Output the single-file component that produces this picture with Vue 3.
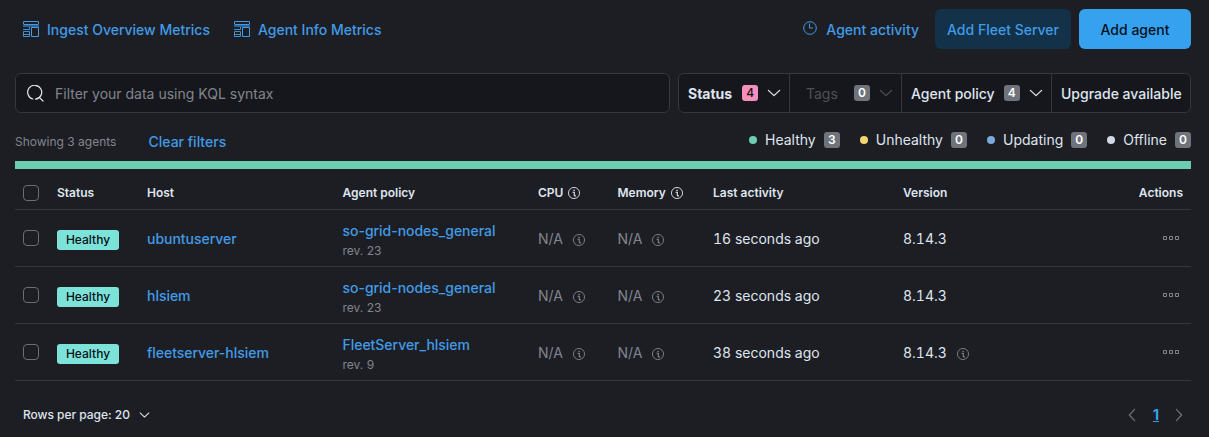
<script setup>
import { h } from 'vue'

const dashboards = ['Ingest Overview Metrics', 'Agent Info Metrics']
const statuses = [
  { name: 'Healthy', count: 3, tone: 'green' },
  { name: 'Unhealthy', count: 0, tone: 'yellow' },
  { name: 'Updating', count: 0, tone: 'blue' },
  { name: 'Offline', count: 0, tone: 'grey' },
]
const agents = [
  { host: 'ubuntuserver', policy: 'so-grid-nodes_general', rev: 23, seen: '16 seconds ago', version: '8.14.3' },
  { host: 'hlsiem', policy: 'so-grid-nodes_general', rev: 23, seen: '23 seconds ago', version: '8.14.3' },
  { host: 'fleetserver-hlsiem', policy: 'FleetServer_hlsiem', rev: 9, seen: '38 seconds ago', version: '8.14.3', note: true },
]

const stroke = { fill: 'none', stroke: 'currentColor' }
const InfoIcon = () =>
  h('svg', { width: 12, height: 12, viewBox: '0 0 16 16' }, [
    h('circle', { cx: 8, cy: 8, r: 7.4, ...stroke, 'stroke-width': 1.2 }),
    h('path', { d: 'M6 7h2.4v4.800M8.400 11.800h2.200M7.200 4.500h1.800', ...stroke, 'stroke-width': 1.5 }),
  ])
const Chevron = (props) =>
  h('svg', { width: props.size, height: props.size, viewBox: '0 0 16 16' }, [
    h('path', { d: 'M1.600 5L8 11l6.400-6', ...stroke, 'stroke-width': 1.5, 'stroke-linecap': 'round', 'stroke-linejoin': 'round' }),
  ])
Chevron.props = ['size']
</script>

<template>
  <main class="page">
    <header class="top">
      <nav class="links">
        <a v-for="d in dashboards" :key="d" class="link dash">
          <svg width="16" height="16" viewBox="0 0 16 16" fill="none" stroke="currentColor">
            <rect x=".5" y=".5" width="15" height="3" rx=".5" />
            <path d="M0 5h16" stroke-width="2" opacity=".55" />
            <path d="M0 8.500h6.500V6M.5 10.500h6v5h-6zM.5 13.500h6" opacity=".9" />
            <path d="M8.500 6.500h7v9h-7z" />
          </svg>
          <span>{{ d }}</span>
        </a>
      </nav>
      <div class="buttons">
        <a class="link activity">
          <svg width="14" height="14" viewBox="0 0 14 14" fill="none" stroke="currentColor">
            <circle cx="7" cy="7" r="6.300" />
            <path d="M6.500 2.500v4.500h3.500" />
          </svg>
          <span>Agent activity</span>
        </a>
        <button class="btn tint">Add Fleet Server</button>
        <button class="btn fill">Add agent</button>
      </div>
    </header>

    <section class="search">
      <div class="query">
        <svg width="17" height="17" viewBox="0 0 17 17" fill="none" stroke="currentColor" stroke-width="1.200" stroke-linecap="round">
          <path d="M5.800 14A7 7 0 1 1 8.600 14.200M12.300 12.300l3.700 3.700" />
        </svg>
        <span>Filter your data using KQL syntax</span>
      </div>
      <div class="filters">
        <div class="filter f-status"><b>Status</b><i class="badge pink">4</i><Chevron :size="14" /></div>
        <div class="filter f-tags"><span>Tags</span><i class="badge">0</i><Chevron :size="14" /></div>
        <div class="filter f-policy"><span>Agent policy</span><i class="badge">4</i><Chevron :size="14" /></div>
        <div class="filter f-upgrade"><span>Upgrade available</span></div>
      </div>
    </section>

    <section class="summary">
      <span class="showing">Showing 3 agents</span>
      <a class="link">Clear filters</a>
      <ul class="legend">
        <li v-for="s in statuses" :key="s.name">
          <span class="dot" :class="s.tone"></span><span>{{ s.name }}</span><i class="badge">{{ s.count }}</i>
        </li>
      </ul>
    </section>
    <div class="bar"></div>

    <section class="table">
      <div class="row head">
        <div><span class="check"></span></div>
        <div>Status</div>
        <div>Host</div>
        <div>Agent policy</div>
        <div class="hinted">CPU <InfoIcon /></div>
        <div class="hinted">Memory <InfoIcon /></div>
        <div>Last activity</div>
        <div>Version</div>
        <div class="end">Actions</div>
      </div>
      <div v-for="a in agents" :key="a.host" class="row agent">
        <div><span class="check"></span></div>
        <div><span class="health">Healthy</span></div>
        <div class="text"><a class="link">{{ a.host }}</a></div>
        <div class="policy"><a class="link">{{ a.policy }}</a><small>rev. {{ a.rev }}</small></div>
        <div class="text na">N/A <InfoIcon /></div>
        <div class="text na">N/A <InfoIcon /></div>
        <div class="text num">{{ a.seen }}</div>
        <div class="text num version">{{ a.version }} <InfoIcon v-if="a.note" /></div>
        <div class="end">
          <svg class="dots" width="16" height="4" viewBox="0 0 16 4" fill="none" stroke="currentColor">
            <path d="M.5.5h3v3h-3zM6.500.5h3v3h-3zM12.500.5h3v3h-3z" />
          </svg>
        </div>
      </div>
    </section>

    <footer class="foot">
      <div class="per-page">Rows per page: 20 <Chevron :size="12" /></div>
      <div class="pager">
        <Chevron class="prev" :size="14" />
        <span class="current">1</span>
        <Chevron class="next" :size="14" />
      </div>
    </footer>
  </main>
</template>

<style>
body {
  background: #1d1e24;
}
</style>

<style scoped>
.page {
  box-sizing: border-box;
  width: 1209px;
  height: 437px;
  overflow: hidden;
  padding: 9px 18px 0 15px;
  background: #1d1e24;
  color: #dfe5ef;
  font: 400 14px/20px Inter, sans-serif;
}
svg {
  flex: none;
  display: block;
}
.link {
  color: #419be6;
  font-weight: 500;
}
.table .link {
  letter-spacing: -0.03px;
}
.top,
.links,
.buttons,
.dash,
.activity,
.search,
.query,
.filters,
.filter,
.summary,
.legend,
.legend li,
.foot,
.per-page,
.pager {
  display: flex;
  align-items: center;
}
.top {
  justify-content: space-between;
  height: 40px;
}
.links {
  gap: 24px;
  padding: 2px 0 0 8px;
}
.dash {
  gap: 8px;
}
.dash svg {
  margin-top: -2px;
}
.activity {
  gap: 9px;
  margin-right: 16px;
  padding-top: 2px;
}
.activity svg {
  margin-top: -4px;
}
.btn {
  height: 40px;
  padding: 2px 0 0;
  border: 0;
  border-radius: 6px;
  font: 500 14px/20px Inter, sans-serif;
}
.tint {
  width: 136px;
  margin-right: 8px;
  background: #133149;
  color: #419be6;
}
.fill {
  width: 112px;
  background: #36a2ef;
  color: #07101a;
}
.search {
  gap: 8px;
  margin-top: 24px;
}
.query,
.filters {
  box-sizing: border-box;
  height: 40px;
  border: 1px solid #343741;
  border-radius: 6px;
  background: #16171c;
}
.query {
  width: 655px;
  gap: 11px;
  padding-left: 11px;
  color: #81858f;
}
.query svg {
  color: #dfe5ef;
}
.query span {
  padding-top: 2px;
}
.filters {
  flex: 1;
}
.filter {
  box-sizing: border-box;
  height: 38px;
  border-left: 1px solid #343741;
  font-weight: 500;
  padding-left: 9px;
}
.filter > span,
.filter > b {
  padding-top: 2px;
}
.filter b {
  font-weight: 700;
}
.filter svg {
  margin-left: 9px;
}
.f-status {
  width: 110px;
  border-left: 0;
}
.f-tags {
  width: 112px;
  padding-left: 16px;
  color: #4d5058;
  font-weight: 400;
}
.f-policy {
  width: 150px;
}
.f-upgrade {
  flex: 1;
  white-space: nowrap;
}
.badge {
  width: 16px;
  height: 16px;
  border-radius: 3px;
  background: #6f737b;
  color: #fff;
  font: 600 12px/16px Inter, sans-serif;
  text-align: center;
}
.filter .badge {
  margin-left: 10px;
}
.f-tags .badge {
  margin-left: 16px;
}
.f-policy .badge {
  margin-left: 9px;
}
.badge.pink {
  background: #f68fbe;
  color: #111;
  font-weight: 500;
}
.summary {
  height: 48px;
}
.showing {
  width: 133.500px;
  padding-top: 10px;
  color: #81858f;
  font-size: 12px;
}
.summary > .link {
  padding-top: 10px;
}
.legend {
  gap: 20px;
  margin: 0 0 0 auto;
  padding: 6px 0 0;
  list-style: none;
}
.legend .badge {
  margin-left: 8px;
}
.dot {
  width: 8px;
  height: 8px;
  margin-right: 8px;
  border-radius: 50%;
}
.green {
  background: #6dccb1;
}
.yellow {
  background: #f1d86f;
}
.blue {
  background: #79aad9;
}
.grey {
  background: #d3dae6;
}
.bar {
  height: 8px;
  background: #6dccb1;
}
.row {
  display: grid;
  grid-template-columns: 34px 90px 195.500px 195.500px 79.500px 95.500px 190px 1fr 80px;
  align-items: center;
  box-sizing: border-box;
  height: 57px;
  border-bottom: 1px solid #343741;
}
.row > div {
  padding: 0 8px;
  white-space: nowrap;
}
.num {
  font-feature-settings: 'tnum';
}
.agent > .text {
  padding-top: 2px;
}
.head {
  height: 41px;
  padding-top: 7px;
  font-size: 12px;
  font-weight: 600;
}
.row .hinted,
.row .na,
.row .version {
  display: flex;
  align-items: center;
  gap: 5px;
}
.row .na,
.row .version {
  gap: 10px;
}
.na svg,
.version svg {
  margin-top: 2px;
}
.na,
.dots {
  color: #81858f;
}
.version svg {
  color: #81858f;
}
.end {
  display: flex;
  justify-content: flex-end;
}
.dots {
  margin: 0 4px 0 0;
}
.check {
  display: block;
  box-sizing: border-box;
  width: 16px;
  height: 16px;
  border: 1px solid #6a6d75;
  border-radius: 4px;
}
.health {
  display: block;
  width: 62px;
  height: 20px;
  margin-top: 4px;
  border-radius: 3px;
  background: #7de2d8;
  color: #07101a;
  font: 500 12px/20px Inter, sans-serif;
  text-align: center;
}
.row > .policy {
  padding-top: 6px;
}
.policy .link,
.policy small {
  display: block;
}
.policy small {
  color: #81858f;
  font-size: 12px;
}
.foot {
  justify-content: space-between;
  padding: 24px 5px 0 8px;
}
.per-page {
  gap: 9px;
  font-size: 12px;
  font-weight: 500;
  letter-spacing: -0.03px;
}
.per-page svg {
  width: 11px;
}
.pager {
  gap: 13px;
  color: #6a6d75;
}
.pager .prev {
  margin-right: 1px;
}
.current {
  color: #36a2ef;
  font-weight: 700;
  text-decoration: underline;
}
.prev {
  transform: rotate(90deg);
}
.next {
  transform: rotate(-90deg);
}
</style>
